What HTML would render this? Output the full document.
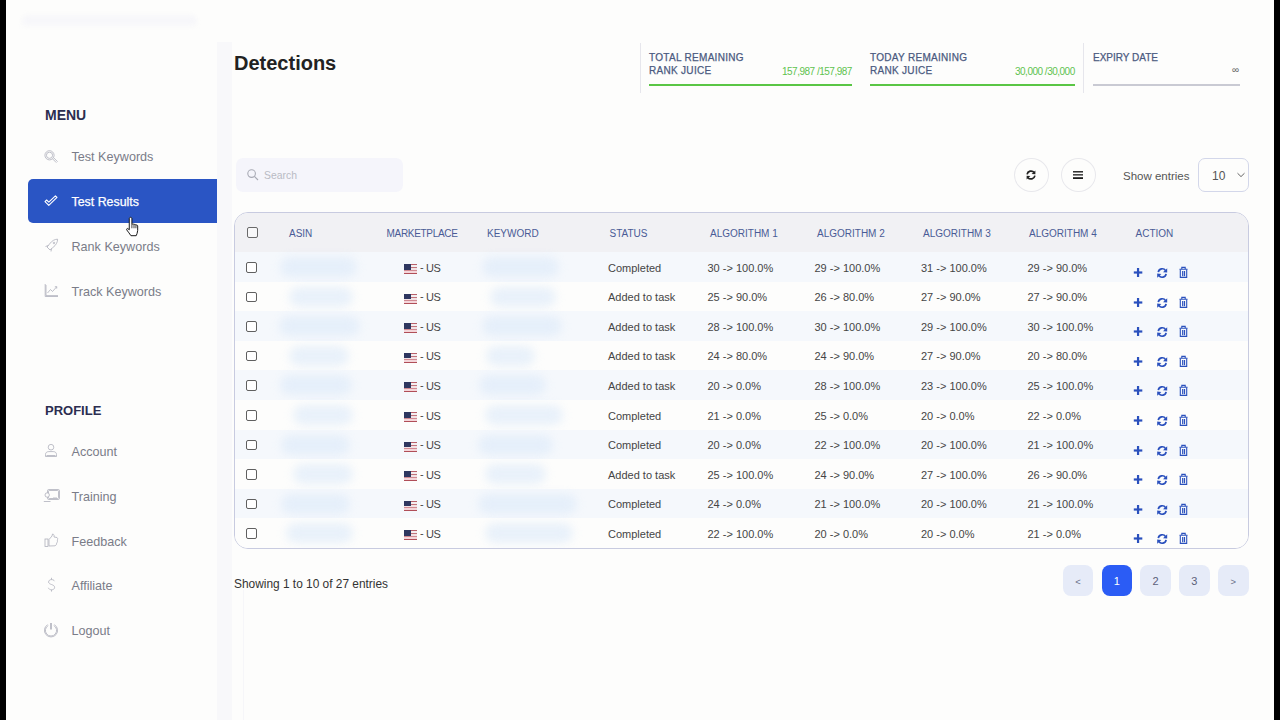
<!DOCTYPE html><html><head><meta charset="utf-8"><style>*{box-sizing:border-box;margin:0;padding:0}
html,body{width:1280px;height:720px;overflow:hidden;background:#fdfdfc;font-family:"Liberation Sans",sans-serif;position:relative}
.a{position:absolute;white-space:nowrap}
.blk{position:absolute;top:0;width:6px;height:720px;background:#000}
.sec{position:absolute;left:45px;font-size:14px;font-weight:bold;color:#2c2e50;line-height:16px}
.nav{position:absolute;left:28px;width:189px;height:44px;font-size:12.6px;color:#7a7c88}
.nav .ic{position:absolute;left:16px;top:14px}
.nav .tx{position:absolute;left:43.5px;top:16px;line-height:14px;white-space:nowrap}
.nav.act{background:#2a55c4;border-radius:5px 0 0 5px;color:#fff}
#edge{position:absolute;left:217px;top:42px;width:15px;height:678px;background:#f8f8fa}
h1{position:absolute;left:234px;top:51px;font-size:20px;font-weight:bold;color:#222;line-height:24px;white-space:nowrap}
.stat{position:absolute;font-size:10px;letter-spacing:0.3px;color:#4b5a80;line-height:13px;white-space:nowrap;-webkit-text-stroke:0.25px #4b5a80}
.val{position:absolute;font-size:10px;letter-spacing:-0.5px;color:#5fc34f;line-height:11px;white-space:nowrap}
.bar{position:absolute;height:2px;background:#5ac645}
.vline{position:absolute;width:1px;background:#e6e6ec}
.search{position:absolute;left:236px;top:158px;width:167px;height:34px;background:#f5f5fb;border-radius:7px}
.circ{position:absolute;width:35px;height:34px;border:1px solid #e8e8ec;border-radius:50%;background:#fdfdfc}
.sel{position:absolute;left:1198px;top:158px;width:51px;height:34px;border:1px solid #d3d7ea;border-radius:7px;background:#fdfdfc}
#tbl{position:absolute;left:234px;top:212px;width:1015px;height:337px;border:1px solid #c8cbe0;border-radius:14px;overflow:hidden;background:#fdfdfc}
.th{position:absolute;left:0;top:0;width:100%;height:39px;background:#f1f1f4}
.hd{position:absolute;top:15px;font-size:10px;color:#4a5b96;line-height:11px;white-space:nowrap}
.row{position:absolute;left:0;width:100%;height:29.6px}
.cb{position:absolute;left:11px;top:10px;width:11px;height:10.5px;border:1.2px solid #606060;border-radius:2px;background:#fff}
.blob{position:absolute;top:5px;height:20px;background:#dbe9f9;border-radius:10px;filter:blur(5px);opacity:.6}
.flag{position:absolute;left:169px;top:12px;width:13px;height:10px;overflow:hidden;background:linear-gradient(#b8606a 0 1.2px,#f4eef0 1.2px 2.8px,#c0737b 2.8px 4px,#f2e2e5 4px 5.6px,#d08a92 5.6px 6.6px,#f4d6da 6.6px 8.6px,#b04e58 8.6px 10px)}
.flag i{position:absolute;left:0;top:0;width:7px;height:5.5px;background:#2e3760}
.mk{position:absolute;left:185px;top:9.5px;font-size:11px;letter-spacing:-0.4px;line-height:12px;color:#454545;white-space:nowrap}
.st{position:absolute;left:373px;top:9.5px;font-size:11px;line-height:12px;color:#454545;white-space:nowrap}
.al{position:absolute;top:9.5px;font-size:11px;line-height:12px;color:#454545;white-space:nowrap}
.acts{position:absolute;left:898px;top:14px;width:60px;height:14px}
.pg{position:absolute;top:565px;width:30.5px;height:30.5px;border-radius:8px;background:#e6ebf8;color:#5b6078;font-size:11px;line-height:33px;text-align:center}
.pg.on{background:#2b5cf5;color:#fff}
</style></head><body><div class="blk" style="left:0"></div>
<div class="blk" style="left:1274px"></div>
<div class="a" style="left:22px;top:15px;width:175px;height:11px;background:#f7f7fa;border-radius:6px;filter:blur(2px)"></div>
<div class="sec" style="top:107px">MENU</div>
<div class="nav" style="top:134px"><svg class="ic" width="16" height="16" viewBox="0 0 16 16"><g fill="none" stroke="#aeb0bb" stroke-width="0.8"><circle cx="5.5" cy="7.3" r="4.6"/><circle cx="5.5" cy="7.3" r="3.1"/><path d="M8.6 10.9 L12.4 14.7 M9.8 9.9 L13.6 13.7"/></g></svg><span class="tx">Test Keywords</span></div>
<div class="nav act" style="top:179px"><svg class="ic" width="16" height="16" viewBox="0 0 16 16"><path d="M1 8.6 L2.6 7 L4.8 9.2 L11.4 2.8 L13 4.4 L4.8 12.4 Z" fill="none" stroke="#fff" stroke-width="1.1" stroke-linejoin="round"/></svg><span class="tx" style="font-size:12.4px;-webkit-text-stroke:0.25px #fff">Test Results</span></div>
<div class="nav" style="top:224px"><svg class="ic" width="16" height="16" viewBox="0 0 16 16"><g fill="none" stroke="#aeb0bb" stroke-width="0.8"><path d="M3 9 L5.5 6 C8 2.5 11 1.2 13.6 1.2 C13.6 4 12.3 7 8.8 9.6 L6 12 Z"/><path d="M1.5 8.5 L4.5 7.5 M7 13.5 L7.5 10.5"/><circle cx="10" cy="5" r="0.8"/></g></svg><span class="tx">Rank Keywords</span></div>
<div class="nav" style="top:269px"><svg class="ic" width="16" height="16" viewBox="0 0 16 16"><g fill="none" stroke="#aeb0bb" stroke-width="0.8"><path d="M1.2 1 L1.2 13.5 L14 13.5"/><path d="M2 2 L2 12.6 L14 12.6"/><path d="M3.5 10 L6.5 6.5 L8.5 8.5 L12.5 4 M10.8 3.8 L12.8 3.6 L12.7 5.6"/></g></svg><span class="tx">Track Keywords</span></div>
<div class="sec" style="top:403px;font-size:13px">PROFILE</div>
<div class="nav" style="top:429px"><svg class="ic" width="16" height="16" viewBox="0 0 16 16"><g fill="none" stroke="#aeb0bb" stroke-width="0.8"><circle cx="7" cy="4.2" r="2.8"/><path d="M1.5 13.5 L1.5 11.5 C1.5 9.5 3 8.6 4.8 8.6 L9.2 8.6 C11 8.6 12.5 9.5 12.5 11.5 L12.5 13.5 Z"/><path d="M2.5 12.5 L11.5 12.5"/></g></svg><span class="tx">Account</span></div>
<div class="nav" style="top:474px"><svg class="ic" width="18" height="16" viewBox="0 0 18 16" style="left:15px"><g fill="none" stroke="#aeb0bb" stroke-width="0.8"><rect x="4.5" y="1.5" width="12" height="10" rx="1.2"/><rect x="5.5" y="2.5" width="10" height="8" rx="0.8"/><circle cx="4.2" cy="7" r="2.2" fill="#fdfdfc"/><path d="M0.8 13.5 L7.5 13.5 M11 9 L11 10 M13 9 L13 10"/></g></svg><span class="tx">Training</span></div>
<div class="nav" style="top:519px"><svg class="ic" width="16" height="16" viewBox="0 0 16 16"><g fill="none" stroke="#aeb0bb" stroke-width="0.8"><rect x="1" y="6" width="3" height="7.5"/><path d="M5 6.5 L8 3 L8.5 1 C9.5 1 10.5 2 10 4 L13 4.5 C14 5 13.8 6.5 13.2 7 C13.8 8 13.4 9.5 12.6 10 C12.8 11.2 12 12.5 11 12.8 L5 13 Z"/></g></svg><span class="tx">Feedback</span></div>
<div class="nav" style="top:563px"><svg class="ic" width="16" height="16" viewBox="0 0 16 16"><g fill="none" stroke="#aeb0bb" stroke-width="0.8"><path d="M10.5 4.2 C10 3 8.8 2.6 7.5 2.6 C5.8 2.6 4.6 3.6 4.6 5 C4.6 8 10.6 7 10.6 10.4 C10.6 12 9.2 12.8 7.5 12.8 C5.8 12.8 4.8 12 4.4 10.8"/><path d="M7.5 0.8 L7.5 2.6 M7.5 12.8 L7.5 14.6"/></g></svg><span class="tx">Affiliate</span></div>
<div class="nav" style="top:608px"><svg class="ic" width="16" height="16" viewBox="0 0 16 16"><g fill="none" stroke="#aeb0bb" stroke-width="0.8"><path d="M4.3 3.5 A5.6 5.6 0 1 0 9.7 3.5"/><path d="M3.6 2.7 A6.6 6.6 0 1 0 10.4 2.7"/><path d="M6.5 1 L6.5 7.5 M7.5 1 L7.5 7.5"/></g></svg><span class="tx">Logout</span></div>
<svg class="a" style="left:125px;top:215.5px" width="18" height="21" viewBox="0 0 20 24"><path d="M6 1.5 C7 1.5 7.6 2.2 7.6 3 L7.6 9.5 C8.2 9 9.6 9 10 9.8 C10.6 9.4 11.8 9.5 12.2 10.4 C12.8 10 14 10.2 14.2 11.2 L14.2 16.5 C14.2 19 13 21 12.5 22.5 L6.5 22.5 C5.5 20.5 3 18 1.8 16 C1.2 15 2 14 3 14.4 L4.6 15.8 L4.6 3 C4.6 2.2 5.2 1.5 6 1.5 Z" fill="#fff" stroke="#111" stroke-width="1.1"/><path d="M7.6 9.5 L7.6 14 M10 9.8 L10 14 M12.2 10.4 L12.2 14" stroke="#111" stroke-width="0.9"/></svg>
<div id="edge"></div>
<div class="a" style="left:243px;top:590px;width:1px;height:130px;background:#f6f6f9"></div>
<h1>Detections</h1>
<div class="vline" style="left:640px;top:43px;height:50px"></div>
<div class="stat" style="left:649px;top:51px">TOTAL REMAINING<br>RANK JUICE</div>
<div class="val" style="left:782px;top:65.5px">157,987 /157,987</div>
<div class="bar" style="left:649px;top:84px;width:203px"></div>
<div class="stat" style="left:870px;top:51px">TODAY REMAINING<br>RANK JUICE</div>
<div class="val" style="left:1015px;top:65.5px">30,000 /30,000</div>
<div class="bar" style="left:870px;top:84px;width:205px"></div>
<div class="vline" style="left:1083px;top:43px;height:50px"></div>
<div class="stat" style="left:1093px;top:51px;letter-spacing:0">EXPIRY DATE</div>
<div class="val" style="left:1232px;top:64px;color:#666;letter-spacing:0">&#8734;</div>
<div class="bar" style="left:1093px;top:84px;width:147px;background:#c9cad3"></div>
<div class="search"></div>
<svg class="a" style="left:247px;top:169px" width="12" height="12" viewBox="0 0 12 12"><g fill="none" stroke="#a8aab4" stroke-width="1.1"><circle cx="4.6" cy="4.6" r="3.8"/><path d="M7.4 7.4 L11 11"/></g></svg>
<div class="a" style="left:264px;top:169.5px;font-size:10.4px;line-height:12px;color:#b9bbc4">Search</div>
<div class="circ" style="left:1014px;top:158px"></div>
<svg class="a" style="left:1025px;top:169px" width="12" height="12" viewBox="0 0 12 12"><g fill="none" stroke="#222" stroke-width="1.7"><path d="M2.1 5.4 A4 4 0 0 1 9.2 3.6"/><path d="M9.9 6.6 A4 4 0 0 1 2.8 8.4"/></g><g fill="#222"><path d="M10.4 1.4 L10.4 5.3 L6.6 5 Z"/><path d="M1.6 10.6 L1.6 6.7 L5.4 7 Z"/></g></svg>
<div class="circ" style="left:1061px;top:158px"></div>
<svg class="a" style="left:1072px;top:170px" width="12" height="10" viewBox="0 0 12 10"><g fill="#1c1c1c"><rect x="1" y="1.1" width="10" height="1.4"/><rect x="1" y="4.2" width="10" height="1.3"/><rect x="1" y="7.2" width="10" height="1.8"/></g></svg>
<div class="a" style="left:1123px;top:169px;font-size:11.5px;line-height:14px;color:#555">Show entries</div>
<div class="sel"></div>
<div class="a" style="left:1212px;top:169px;font-size:12px;line-height:14px;color:#555">10</div>
<svg class="a" style="left:1236px;top:172px" width="10" height="6" viewBox="0 0 10 6"><path d="M1.5 1.2 L5 4.6 L8.5 1.2" fill="none" stroke="#666" stroke-width="1"/></svg>
<div id="tbl">
<div class="th">
<div class="cb" style="left:12.4px;top:14px;border-color:#6a6a6a;background:#f8f8f9"></div>
<div class="hd" style="left:54px">ASIN</div>
<div class="hd" style="left:151.5px;letter-spacing:-0.3px">MARKETPLACE</div>
<div class="hd" style="left:252px">KEYWORD</div>
<div class="hd" style="left:374.5px">STATUS</div>
<div class="hd" style="left:475px">ALGORITHM 1</div>
<div class="hd" style="left:582px">ALGORITHM 2</div>
<div class="hd" style="left:688px">ALGORITHM 3</div>
<div class="hd" style="left:794px">ALGORITHM 4</div>
<div class="hd" style="left:900.5px">ACTION</div>
</div>
<div class="row" style="top:39.0px;background:#f5f8fc"><div class="cb"></div><div class="blob" style="left:45px;width:77px"></div><div class="flag"><i></i></div><div class="mk"><span style="position:relative;top:-0.8px">-</span> US</div><div class="blob" style="left:247px;width:77px"></div><div class="st">Completed</div><div class="al" style="left:472.5px">30 -> 100.0%</div><div class="al" style="left:579.5px">29 -> 100.0%</div><div class="al" style="left:686px">31 -> 100.0%</div><div class="al" style="left:792.5px">29 -> 90.0%</div><div class="acts"><svg width="60" height="14" viewBox="0 0 60 14"><g fill="#2a50bd"><rect x="0.8" y="5.4" width="8.5" height="2.2"/><rect x="3.95" y="2" width="2.2" height="9"/></g><g fill="none" stroke="#2a50bd" stroke-width="1.7"><path d="M25.3 6.2 A4 4 0 0 1 32.6 4.6"/><path d="M33.1 7.8 A4 4 0 0 1 25.8 9.4"/></g><g fill="#2a50bd"><path d="M34.2 2.2 L34.2 6.6 L30 6.2 Z"/><path d="M24.2 11.8 L24.2 7.6 L28.4 8 Z"/></g><g transform="translate(2,0)"><g fill="none" stroke="#2a50bd" stroke-width="1.1"><path d="M44.5 3.2 L52.5 3.2 M46.8 3 L46.8 1.4 L50.2 1.4 L50.2 3"/><path d="M45.3 3.4 L45.3 11.4 L51.7 11.4 L51.7 3.4"/></g><g fill="#2a50bd"><rect x="47.1" y="5" width="1.2" height="5.2"/><rect x="48.9" y="5" width="1.2" height="5.2"/></g></g></svg>
</div></div><div class="row" style="top:68.6px;background:#fdfdfc"><div class="cb"></div><div class="blob" style="left:54px;width:64px"></div><div class="flag"><i></i></div><div class="mk"><span style="position:relative;top:-0.8px">-</span> US</div><div class="blob" style="left:255px;width:66px"></div><div class="st">Added to task</div><div class="al" style="left:472.5px">25 -> 90.0%</div><div class="al" style="left:579.5px">26 -> 80.0%</div><div class="al" style="left:686px">27 -> 90.0%</div><div class="al" style="left:792.5px">27 -> 90.0%</div><div class="acts"><svg width="60" height="14" viewBox="0 0 60 14"><g fill="#2a50bd"><rect x="0.8" y="5.4" width="8.5" height="2.2"/><rect x="3.95" y="2" width="2.2" height="9"/></g><g fill="none" stroke="#2a50bd" stroke-width="1.7"><path d="M25.3 6.2 A4 4 0 0 1 32.6 4.6"/><path d="M33.1 7.8 A4 4 0 0 1 25.8 9.4"/></g><g fill="#2a50bd"><path d="M34.2 2.2 L34.2 6.6 L30 6.2 Z"/><path d="M24.2 11.8 L24.2 7.6 L28.4 8 Z"/></g><g transform="translate(2,0)"><g fill="none" stroke="#2a50bd" stroke-width="1.1"><path d="M44.5 3.2 L52.5 3.2 M46.8 3 L46.8 1.4 L50.2 1.4 L50.2 3"/><path d="M45.3 3.4 L45.3 11.4 L51.7 11.4 L51.7 3.4"/></g><g fill="#2a50bd"><rect x="47.1" y="5" width="1.2" height="5.2"/><rect x="48.9" y="5" width="1.2" height="5.2"/></g></g></svg>
</div></div><div class="row" style="top:98.2px;background:#f5f8fc"><div class="cb"></div><div class="blob" style="left:44px;width:81px"></div><div class="flag"><i></i></div><div class="mk"><span style="position:relative;top:-0.8px">-</span> US</div><div class="blob" style="left:247px;width:80px"></div><div class="st">Added to task</div><div class="al" style="left:472.5px">28 -> 100.0%</div><div class="al" style="left:579.5px">30 -> 100.0%</div><div class="al" style="left:686px">29 -> 100.0%</div><div class="al" style="left:792.5px">30 -> 100.0%</div><div class="acts"><svg width="60" height="14" viewBox="0 0 60 14"><g fill="#2a50bd"><rect x="0.8" y="5.4" width="8.5" height="2.2"/><rect x="3.95" y="2" width="2.2" height="9"/></g><g fill="none" stroke="#2a50bd" stroke-width="1.7"><path d="M25.3 6.2 A4 4 0 0 1 32.6 4.6"/><path d="M33.1 7.8 A4 4 0 0 1 25.8 9.4"/></g><g fill="#2a50bd"><path d="M34.2 2.2 L34.2 6.6 L30 6.2 Z"/><path d="M24.2 11.8 L24.2 7.6 L28.4 8 Z"/></g><g transform="translate(2,0)"><g fill="none" stroke="#2a50bd" stroke-width="1.1"><path d="M44.5 3.2 L52.5 3.2 M46.8 3 L46.8 1.4 L50.2 1.4 L50.2 3"/><path d="M45.3 3.4 L45.3 11.4 L51.7 11.4 L51.7 3.4"/></g><g fill="#2a50bd"><rect x="47.1" y="5" width="1.2" height="5.2"/><rect x="48.9" y="5" width="1.2" height="5.2"/></g></g></svg>
</div></div><div class="row" style="top:127.8px;background:#fdfdfc"><div class="cb"></div><div class="blob" style="left:54px;width:60px"></div><div class="flag"><i></i></div><div class="mk"><span style="position:relative;top:-0.8px">-</span> US</div><div class="blob" style="left:251px;width:49px"></div><div class="st">Added to task</div><div class="al" style="left:472.5px">24 -> 80.0%</div><div class="al" style="left:579.5px">24 -> 90.0%</div><div class="al" style="left:686px">27 -> 90.0%</div><div class="al" style="left:792.5px">20 -> 80.0%</div><div class="acts"><svg width="60" height="14" viewBox="0 0 60 14"><g fill="#2a50bd"><rect x="0.8" y="5.4" width="8.5" height="2.2"/><rect x="3.95" y="2" width="2.2" height="9"/></g><g fill="none" stroke="#2a50bd" stroke-width="1.7"><path d="M25.3 6.2 A4 4 0 0 1 32.6 4.6"/><path d="M33.1 7.8 A4 4 0 0 1 25.8 9.4"/></g><g fill="#2a50bd"><path d="M34.2 2.2 L34.2 6.6 L30 6.2 Z"/><path d="M24.2 11.8 L24.2 7.6 L28.4 8 Z"/></g><g transform="translate(2,0)"><g fill="none" stroke="#2a50bd" stroke-width="1.1"><path d="M44.5 3.2 L52.5 3.2 M46.8 3 L46.8 1.4 L50.2 1.4 L50.2 3"/><path d="M45.3 3.4 L45.3 11.4 L51.7 11.4 L51.7 3.4"/></g><g fill="#2a50bd"><rect x="47.1" y="5" width="1.2" height="5.2"/><rect x="48.9" y="5" width="1.2" height="5.2"/></g></g></svg>
</div></div><div class="row" style="top:157.4px;background:#f5f8fc"><div class="cb"></div><div class="blob" style="left:45px;width:72px"></div><div class="flag"><i></i></div><div class="mk"><span style="position:relative;top:-0.8px">-</span> US</div><div class="blob" style="left:244px;width:67px"></div><div class="st">Added to task</div><div class="al" style="left:472.5px">20 -> 0.0%</div><div class="al" style="left:579.5px">28 -> 100.0%</div><div class="al" style="left:686px">23 -> 100.0%</div><div class="al" style="left:792.5px">25 -> 100.0%</div><div class="acts"><svg width="60" height="14" viewBox="0 0 60 14"><g fill="#2a50bd"><rect x="0.8" y="5.4" width="8.5" height="2.2"/><rect x="3.95" y="2" width="2.2" height="9"/></g><g fill="none" stroke="#2a50bd" stroke-width="1.7"><path d="M25.3 6.2 A4 4 0 0 1 32.6 4.6"/><path d="M33.1 7.8 A4 4 0 0 1 25.8 9.4"/></g><g fill="#2a50bd"><path d="M34.2 2.2 L34.2 6.6 L30 6.2 Z"/><path d="M24.2 11.8 L24.2 7.6 L28.4 8 Z"/></g><g transform="translate(2,0)"><g fill="none" stroke="#2a50bd" stroke-width="1.1"><path d="M44.5 3.2 L52.5 3.2 M46.8 3 L46.8 1.4 L50.2 1.4 L50.2 3"/><path d="M45.3 3.4 L45.3 11.4 L51.7 11.4 L51.7 3.4"/></g><g fill="#2a50bd"><rect x="47.1" y="5" width="1.2" height="5.2"/><rect x="48.9" y="5" width="1.2" height="5.2"/></g></g></svg>
</div></div><div class="row" style="top:187.0px;background:#fdfdfc"><div class="cb"></div><div class="blob" style="left:58px;width:60px"></div><div class="flag"><i></i></div><div class="mk"><span style="position:relative;top:-0.8px">-</span> US</div><div class="blob" style="left:250px;width:78px"></div><div class="st">Completed</div><div class="al" style="left:472.5px">21 -> 0.0%</div><div class="al" style="left:579.5px">25 -> 0.0%</div><div class="al" style="left:686px">20 -> 0.0%</div><div class="al" style="left:792.5px">22 -> 0.0%</div><div class="acts"><svg width="60" height="14" viewBox="0 0 60 14"><g fill="#2a50bd"><rect x="0.8" y="5.4" width="8.5" height="2.2"/><rect x="3.95" y="2" width="2.2" height="9"/></g><g fill="none" stroke="#2a50bd" stroke-width="1.7"><path d="M25.3 6.2 A4 4 0 0 1 32.6 4.6"/><path d="M33.1 7.8 A4 4 0 0 1 25.8 9.4"/></g><g fill="#2a50bd"><path d="M34.2 2.2 L34.2 6.6 L30 6.2 Z"/><path d="M24.2 11.8 L24.2 7.6 L28.4 8 Z"/></g><g transform="translate(2,0)"><g fill="none" stroke="#2a50bd" stroke-width="1.1"><path d="M44.5 3.2 L52.5 3.2 M46.8 3 L46.8 1.4 L50.2 1.4 L50.2 3"/><path d="M45.3 3.4 L45.3 11.4 L51.7 11.4 L51.7 3.4"/></g><g fill="#2a50bd"><rect x="47.1" y="5" width="1.2" height="5.2"/><rect x="48.9" y="5" width="1.2" height="5.2"/></g></g></svg>
</div></div><div class="row" style="top:216.6px;background:#f5f8fc"><div class="cb"></div><div class="blob" style="left:46px;width:69px"></div><div class="flag"><i></i></div><div class="mk"><span style="position:relative;top:-0.8px">-</span> US</div><div class="blob" style="left:243px;width:75px"></div><div class="st">Completed</div><div class="al" style="left:472.5px">20 -> 0.0%</div><div class="al" style="left:579.5px">22 -> 100.0%</div><div class="al" style="left:686px">20 -> 100.0%</div><div class="al" style="left:792.5px">21 -> 100.0%</div><div class="acts"><svg width="60" height="14" viewBox="0 0 60 14"><g fill="#2a50bd"><rect x="0.8" y="5.4" width="8.5" height="2.2"/><rect x="3.95" y="2" width="2.2" height="9"/></g><g fill="none" stroke="#2a50bd" stroke-width="1.7"><path d="M25.3 6.2 A4 4 0 0 1 32.6 4.6"/><path d="M33.1 7.8 A4 4 0 0 1 25.8 9.4"/></g><g fill="#2a50bd"><path d="M34.2 2.2 L34.2 6.6 L30 6.2 Z"/><path d="M24.2 11.8 L24.2 7.6 L28.4 8 Z"/></g><g transform="translate(2,0)"><g fill="none" stroke="#2a50bd" stroke-width="1.1"><path d="M44.5 3.2 L52.5 3.2 M46.8 3 L46.8 1.4 L50.2 1.4 L50.2 3"/><path d="M45.3 3.4 L45.3 11.4 L51.7 11.4 L51.7 3.4"/></g><g fill="#2a50bd"><rect x="47.1" y="5" width="1.2" height="5.2"/><rect x="48.9" y="5" width="1.2" height="5.2"/></g></g></svg>
</div></div><div class="row" style="top:246.2px;background:#fdfdfc"><div class="cb"></div><div class="blob" style="left:58px;width:60px"></div><div class="flag"><i></i></div><div class="mk"><span style="position:relative;top:-0.8px">-</span> US</div><div class="blob" style="left:250px;width:61px"></div><div class="st">Added to task</div><div class="al" style="left:472.5px">25 -> 100.0%</div><div class="al" style="left:579.5px">24 -> 90.0%</div><div class="al" style="left:686px">27 -> 100.0%</div><div class="al" style="left:792.5px">26 -> 90.0%</div><div class="acts"><svg width="60" height="14" viewBox="0 0 60 14"><g fill="#2a50bd"><rect x="0.8" y="5.4" width="8.5" height="2.2"/><rect x="3.95" y="2" width="2.2" height="9"/></g><g fill="none" stroke="#2a50bd" stroke-width="1.7"><path d="M25.3 6.2 A4 4 0 0 1 32.6 4.6"/><path d="M33.1 7.8 A4 4 0 0 1 25.8 9.4"/></g><g fill="#2a50bd"><path d="M34.2 2.2 L34.2 6.6 L30 6.2 Z"/><path d="M24.2 11.8 L24.2 7.6 L28.4 8 Z"/></g><g transform="translate(2,0)"><g fill="none" stroke="#2a50bd" stroke-width="1.1"><path d="M44.5 3.2 L52.5 3.2 M46.8 3 L46.8 1.4 L50.2 1.4 L50.2 3"/><path d="M45.3 3.4 L45.3 11.4 L51.7 11.4 L51.7 3.4"/></g><g fill="#2a50bd"><rect x="47.1" y="5" width="1.2" height="5.2"/><rect x="48.9" y="5" width="1.2" height="5.2"/></g></g></svg>
</div></div><div class="row" style="top:275.8px;background:#f5f8fc"><div class="cb"></div><div class="blob" style="left:46px;width:69px"></div><div class="flag"><i></i></div><div class="mk"><span style="position:relative;top:-0.8px">-</span> US</div><div class="blob" style="left:243px;width:99px"></div><div class="st">Completed</div><div class="al" style="left:472.5px">24 -> 0.0%</div><div class="al" style="left:579.5px">21 -> 100.0%</div><div class="al" style="left:686px">20 -> 100.0%</div><div class="al" style="left:792.5px">21 -> 100.0%</div><div class="acts"><svg width="60" height="14" viewBox="0 0 60 14"><g fill="#2a50bd"><rect x="0.8" y="5.4" width="8.5" height="2.2"/><rect x="3.95" y="2" width="2.2" height="9"/></g><g fill="none" stroke="#2a50bd" stroke-width="1.7"><path d="M25.3 6.2 A4 4 0 0 1 32.6 4.6"/><path d="M33.1 7.8 A4 4 0 0 1 25.8 9.4"/></g><g fill="#2a50bd"><path d="M34.2 2.2 L34.2 6.6 L30 6.2 Z"/><path d="M24.2 11.8 L24.2 7.6 L28.4 8 Z"/></g><g transform="translate(2,0)"><g fill="none" stroke="#2a50bd" stroke-width="1.1"><path d="M44.5 3.2 L52.5 3.2 M46.8 3 L46.8 1.4 L50.2 1.4 L50.2 3"/><path d="M45.3 3.4 L45.3 11.4 L51.7 11.4 L51.7 3.4"/></g><g fill="#2a50bd"><rect x="47.1" y="5" width="1.2" height="5.2"/><rect x="48.9" y="5" width="1.2" height="5.2"/></g></g></svg>
</div></div><div class="row" style="top:305.4px;background:#fdfdfc"><div class="cb"></div><div class="blob" style="left:51px;width:67px"></div><div class="flag"><i></i></div><div class="mk"><span style="position:relative;top:-0.8px">-</span> US</div><div class="blob" style="left:250px;width:88px"></div><div class="st">Completed</div><div class="al" style="left:472.5px">22 -> 100.0%</div><div class="al" style="left:579.5px">20 -> 0.0%</div><div class="al" style="left:686px">20 -> 0.0%</div><div class="al" style="left:792.5px">21 -> 0.0%</div><div class="acts"><svg width="60" height="14" viewBox="0 0 60 14"><g fill="#2a50bd"><rect x="0.8" y="5.4" width="8.5" height="2.2"/><rect x="3.95" y="2" width="2.2" height="9"/></g><g fill="none" stroke="#2a50bd" stroke-width="1.7"><path d="M25.3 6.2 A4 4 0 0 1 32.6 4.6"/><path d="M33.1 7.8 A4 4 0 0 1 25.8 9.4"/></g><g fill="#2a50bd"><path d="M34.2 2.2 L34.2 6.6 L30 6.2 Z"/><path d="M24.2 11.8 L24.2 7.6 L28.4 8 Z"/></g><g transform="translate(2,0)"><g fill="none" stroke="#2a50bd" stroke-width="1.1"><path d="M44.5 3.2 L52.5 3.2 M46.8 3 L46.8 1.4 L50.2 1.4 L50.2 3"/><path d="M45.3 3.4 L45.3 11.4 L51.7 11.4 L51.7 3.4"/></g><g fill="#2a50bd"><rect x="47.1" y="5" width="1.2" height="5.2"/><rect x="48.9" y="5" width="1.2" height="5.2"/></g></g></svg>
</div></div>
</div>
<div class="a" style="left:234px;top:577px;font-size:11.9px;line-height:14px;color:#333">Showing 1 to 10 of 27 entries</div>
<div class="pg" style="left:1062.8px;font-size:9.5px;color:#6a7088">&lt;</div>
<div class="pg on" style="left:1101.5px">1</div>
<div class="pg" style="left:1140.2px">2</div>
<div class="pg" style="left:1179px">3</div>
<div class="pg" style="left:1218px;font-size:9.5px;color:#6a7088">&gt;</div>
</body></html>
